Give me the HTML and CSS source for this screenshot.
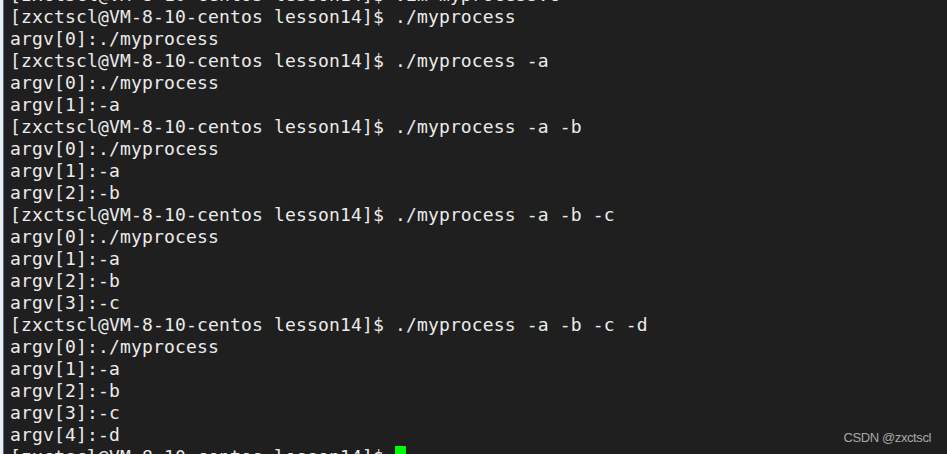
FILE: index.html
```html
<!DOCTYPE html>
<html>
<head>
<meta charset="utf-8">
<link rel="stylesheet" href="styles.css">
</head>
<body>
<div class="window">
  <div class="edge"></div>
  <pre class="term">[zxctscl@VM-8-10-centos lesson14]$ vim myprocess.c
[zxctscl@VM-8-10-centos lesson14]$ ./myprocess
argv[0]:./myprocess
[zxctscl@VM-8-10-centos lesson14]$ ./myprocess -a
argv[0]:./myprocess
argv[1]:-a
[zxctscl@VM-8-10-centos lesson14]$ ./myprocess -a -b
argv[0]:./myprocess
argv[1]:-a
argv[2]:-b
[zxctscl@VM-8-10-centos lesson14]$ ./myprocess -a -b -c
argv[0]:./myprocess
argv[1]:-a
argv[2]:-b
argv[3]:-c
[zxctscl@VM-8-10-centos lesson14]$ ./myprocess -a -b -c -d
argv[0]:./myprocess
argv[1]:-a
argv[2]:-b
argv[3]:-c
argv[4]:-d
[zxctscl@VM-8-10-centos lesson14]$ <span class="cursor"> </span></pre>
  <div class="mark">CSDN @zxctscl</div>
</div>
</body>
</html>
```
FILE: styles.css
```css
html, body {
  margin: 0;
  padding: 0;
  background: #1f1f1f;
  overflow: hidden;
}
.window {
  display: flex;
  width: 947px;
  height: 454px;
  background: #1f1f1f;
  overflow: hidden;
  position: relative;
}
.edge {
  width: 3px;
  flex: none;
  background: #eceef0;
  border-right: 1px solid #4d6f98;
}
.term {
  margin: -16px 0 0 6px;
  font-family: "DejaVu Sans Mono", monospace;
  font-size: 18px;
  letter-spacing: 0.16px;
  line-height: 22px;
  color: #ebebeb;
  white-space: pre;
}
.cursor {
  display: inline-block;
  width: 11px;
  height: 22px;
  background: #00ff00;
  vertical-align: top;
}
.mark {
  position: absolute;
  right: 16px;
  bottom: 9px;
  font-family: "Liberation Sans", Arial, sans-serif;
  font-size: 13px;
  letter-spacing: -0.4px;
  color: #a8a8a8;
}
```
